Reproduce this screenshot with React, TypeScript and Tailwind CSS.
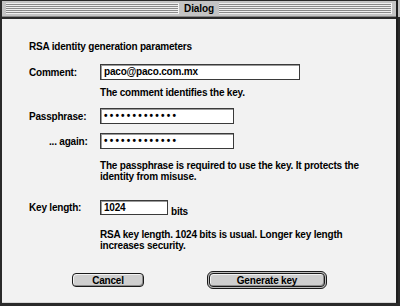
import React from "react";

const font = { fontFamily: '"Liberation Sans", Arial, sans-serif' };

// striped filler for the title bar
const Stripes = () => (
  <div className="h-[11px] flex-1 bg-[repeating-linear-gradient(to_bottom,#f0f0f0_0px,#f0f0f0_1px,#8a8a8a_1px,#8a8a8a_2px)] border-r border-[#f4f4f4]" />
);

const Field = ({ value, width, secret, height = "h-[16px]" }: { value: string; width: string; secret?: boolean; height?: string }) => (
  <div
    className={`${width} ${height} bg-white border border-[#3a3a3a] shadow-[inset_1px_1px_0_#9a9a9a] flex items-center pl-[3px] text-[10px] font-bold text-black leading-none ${
      secret ? "tracking-[2.2px]" : "tracking-[-0.2px]"
    }`}
  >
    {value}
  </div>
);

const Button = ({ label, width, primary }: { label: string; width: string; primary?: boolean }) => {
  const inner = (
    <div
      className={`${width} h-[14px] rounded-[4px] border border-[#1a1a1a] bg-[#cfcfcf] shadow-[inset_1px_1px_0_#f2f2f2,inset_-1px_-1px_0_#8e8e8e] flex items-center justify-center text-[10px] font-bold tracking-[-0.2px] text-black`}
    >
      {label}
    </div>
  );
  if (!primary) return inner;
  return (
    <div className="rounded-[6px] border border-[#1a1a1a] bg-[#bdbdbd] p-[1px]">{inner}</div>
  );
};

export default function App() {
  return (
    <div className="w-[400px] h-[306px] bg-[#2a2a2a] flex overflow-hidden" style={font}>
      <div className="w-[396px] h-[303px] border-l-2 border-t border-[#2a2a2a] flex flex-col">
        {/* title bar */}
        <div className="h-[16px] bg-[#c4c4c4] flex items-center px-[4px] gap-[3px] border-b border-[#888]">
          <Stripes />
          <div className="text-[10px] font-bold text-black tracking-[-0.1px] px-[2px]">Dialog</div>
          <Stripes />
        </div>
        <div className="h-[2px] bg-[#2a2a2a]" />

        {/* body */}
        <div className="flex-1 bg-[#f2f2f2] border-b border-[#d8d8d8] pl-[27px] text-[10px] font-bold text-black tracking-[-0.2px] leading-[11px] flex flex-col">
          <div className="mt-[22px]">RSA identity generation parameters</div>

          <div className="mt-[12px] flex items-center">
            <div className="w-[71px]">Comment:</div>
            <Field value="paco@paco.com.mx" width="w-[200px]" />
          </div>
          <div className="mt-[7px] ml-[71px]">The comment identifies the key.</div>

          <div className="mt-[10px] flex items-center">
            <div className="w-[71px]">Passphrase:</div>
            <Field value="•••••••••••••" width="w-[134px]" secret />
          </div>
          <div className="mt-[9px] flex items-center">
            <div className="w-[71px] pl-[20px]">... again:</div>
            <Field value="•••••••••••••" width="w-[134px]" secret />
          </div>

          <div className="mt-[11px] ml-[71px] leading-[11px]">
            The passphrase is required to use the key. It protects the
            <br />
            identity from misuse.
          </div>

          <div className="mt-[18px] flex items-end">
            <div className="w-[71px] self-center">Key length:</div>
            <Field value="1024" width="w-[68px]" height="h-[15px]" />
            <div className="ml-[3px] translate-y-[2px]">bits</div>
          </div>

          <div className="mt-[14px] ml-[71px] leading-[11px]">
            RSA key length. 1024 bits is usual. Longer key length
            <br />
            increases security.
          </div>

          <div className="mt-[20px] flex items-center">
            <div className="ml-[43px]">
              <Button label="Cancel" width="w-[72px]" />
            </div>
            <div className="ml-[63px]">
              <Button label="Generate key" width="w-[116px]" primary />
            </div>
          </div>
        </div>
      </div>
      <div className="w-[4px] h-[303px] flex">
        <div className="w-[2px] bg-[#1e1e1e]" />
        <div className="w-[2px] bg-[#bdbdbd] h-[17px]" />
      </div>
    </div>
  );
}
